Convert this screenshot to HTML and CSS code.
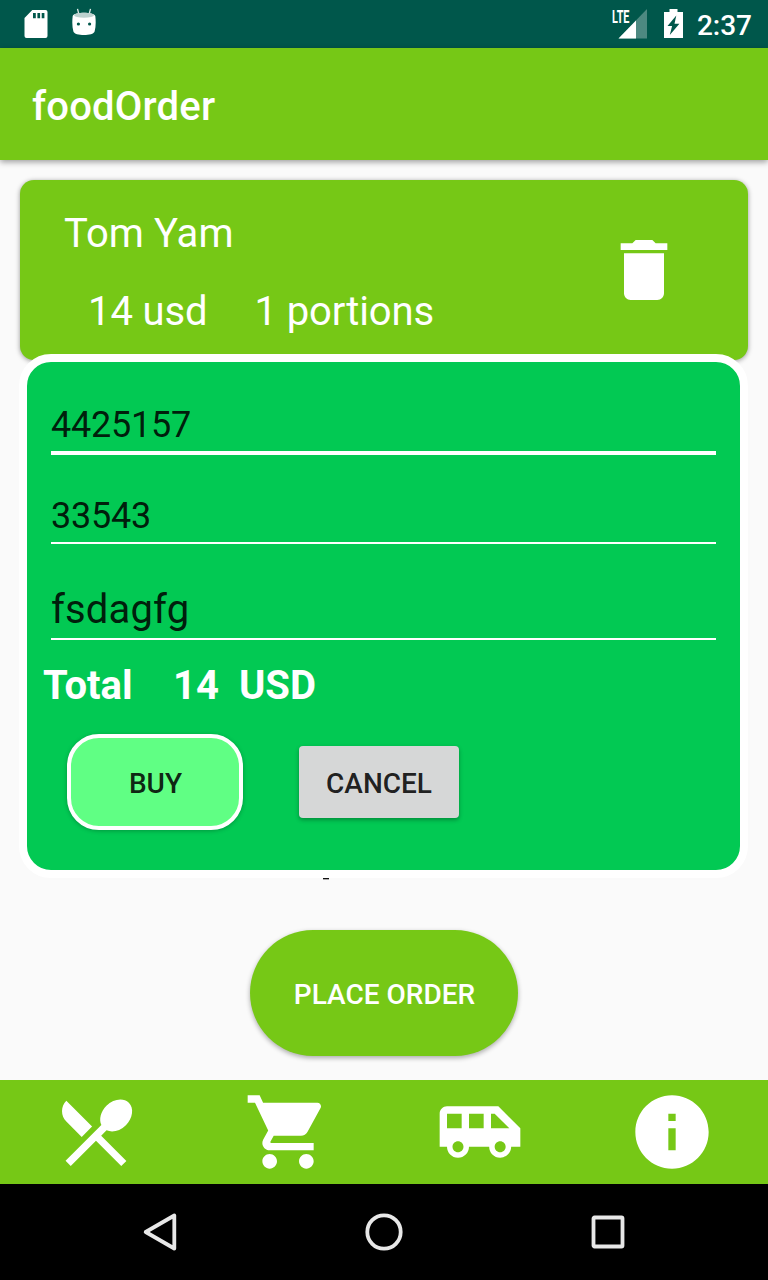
FILE: index.html
```html
<!DOCTYPE html>
<html lang="en">
<head>
<meta charset="utf-8">
<title>foodOrder</title>
<link rel="stylesheet" href="styles.css">
</head>
<body>
<div class="screen">
  <header class="status">
    <div class="status-left">
      <svg width="24" height="28" viewBox="0 0 24 28"><path fill="#fff" fill-rule="evenodd" d="M8.300 0H21.500a2 2 0 0 1 2 2V26a2 2 0 0 1-2 2H2.500a2 2 0 0 1-2-2V8zM9 3v5.200h2.800V3zM13.400 3v5.200h2.700V3zM17.700 3v5.200h2.700V3z"/></svg>
      <svg width="24" height="28" viewBox="0 0 24 28"><path d="M6.700 5.500L5.500 .8M17.300 5.500L18.500 .8" stroke="#dfeae8" stroke-width="1.300" fill="none"/><path fill="#fff" d="M.7 8C2 3.800 22 3.800 23.300 8c.7 6 .5 11-.7 15.500C21.500 28.200 2.500 28.200 1.400 23.500.2 19 0 14 .7 8z"/><ellipse cx="12" cy="7.200" rx="10" ry="2.500" fill="#bdd2cf"/><circle cx="6.400" cy="16" r="1.600" fill="#00574b"/><circle cx="17.600" cy="16" r="1.600" fill="#00574b"/></svg>
    </div>
    <div class="status-right">
      <div class="signal">
        <svg width="30" height="30" viewBox="0 0 30 30"><path d="M30 0V29.500H1.500z" fill="#4d8981"/><path d="M19 11.600V29.500H1.500z" fill="#fff"/></svg>
        <span class="lte">LTE</span>
      </div>
      <svg class="battery" width="19" height="29" viewBox="0 0 19 29"><path fill="#fff" fill-rule="evenodd" d="M5.500 0h8v3H19v26H0V3h5.500zM12.300 6.500L3.500 17h4.600l-2.300 9 9.600-11.300h-4.900z"/></svg>
      <span class="clock">2:37</span>
    </div>
  </header>
  <header class="appbar"><h1 class="title">foodOrder</h1></header>

  <main class="content">
    <section class="card">
      <div class="card-info">
        <p class="dish">Tom Yam</p>
        <p class="details"><span>14 usd</span><span>1 portions</span></p>
      </div>
      <svg class="trash" width="80" height="80" viewBox="0 0 24 24"><path fill="#fff" d="M6 19c0 1.100.9 2 2 2h8c1.100 0 2-.9 2-2V7H6v12zM19 4h-3.500l-1-1h-5l-1 1H5v2h14V4z"/></svg>
    </section>
    <button class="place">PLACE ORDER</button>
    <span class="hidden-total"></span>
    <form class="dialog">
      <div class="field focused">4425157</div>
      <div class="field">33543</div>
      <div class="field address">fsdagfg</div>
      <div class="total"><span class="t-label">Total</span><span class="t-sum">14</span><span>USD</span></div>
      <div class="actions">
        <button type="button" class="buy">BUY</button>
        <button type="button" class="cancel">CANCEL</button>
      </div>
    </form>
  </main>

  <nav class="tabs">
    <svg viewBox="0 0 24 24"><path d="M8.100 13.340l2.830-2.830L3.910 3.500c-1.560 1.560-1.560 4.090 0 5.660l4.190 4.180zm6.780-1.810c1.530.71 3.680.21 5.270-1.380 1.910-1.910 2.280-4.650.81-6.120-1.460-1.460-4.200-1.100-6.120.81-1.590 1.590-2.090 3.740-1.380 5.270L3.700 19.870l1.410 1.410L12 14.410l6.880 6.880 1.410-1.410L13.410 13l1.470-1.470z"/></svg>
    <svg viewBox="0 0 24 24"><path d="M7 18c-1.100 0-1.990.9-1.990 2S5.900 22 7 22s2-.9 2-2-.9-2-2-2zM1 2v2h2l3.600 7.590-1.350 2.450c-.16.28-.25.61-.25.96 0 1.100.9 2 2 2h12v-2H7.420c-.14 0-.25-.11-.25-.25l.03-.12.9-1.630h7.450c.75 0 1.410-.41 1.750-1.030l3.580-6.490c.08-.14.12-.31.12-.48 0-.55-.45-1-1-1H5.210l-.94-2H1zm16 16c-1.100 0-1.990.9-1.990 2s.89 2 1.990 2 2-.9 2-2-.9-2-2-2z"/></svg>
    <svg viewBox="0 0 24 24"><path d="M17 5H3c-1.100 0-2 .89-2 2v9h2c0 1.650 1.340 3 3 3s3-1.350 3-3h5.500c0 1.650 1.340 3 3 3s3-1.350 3-3H23v-5l-6-6zM3 11V7h4v4H3zm3 6.500c-.83 0-1.500-.67-1.500-1.500s.67-1.500 1.500-1.500 1.500.67 1.500 1.500-.67 1.500-1.500 1.500zm7-6.500H9V7h4v4zm4.500 6.500c-.83 0-1.500-.67-1.500-1.500s.67-1.500 1.500-1.500 1.500.67 1.500 1.500-.67 1.500-1.500 1.500zM15 11V7h1l4 4h-5z"/></svg>
    <svg viewBox="0 0 24 24"><path d="M12 2C6.480 2 2 6.480 2 12s4.480 10 10 10 10-4.480 10-10S17.520 2 12 2zm1 15h-2v-6h2v6zm0-8h-2V7h2v2z"/></svg>
  </nav>
  <footer class="sysnav">
    <svg viewBox="0 0 48 48"><path d="M38.300 7.500V40.500L9.700 24z"/></svg>
    <svg viewBox="0 0 48 48"><circle cx="24" cy="24" r="16.700"/></svg>
    <svg viewBox="0 0 48 48"><rect x="9.500" y="9.500" width="29" height="29" rx="1"/></svg>
  </footer>
</div>
</body>
</html>
```
FILE: styles.css
```css
* { box-sizing: border-box; }
body, h1, p { margin: 0; }
body { font-family: Roboto, sans-serif; background: #fafafa; }
svg { display: block; flex: none; }
button { font: 500 28px/32px Roboto, sans-serif; padding: 0; border: 0; }

.screen { width: 768px; height: 1280px; display: flex; flex-direction: column; overflow: hidden; }

.status { height: 48px; background: #00574b; display: flex; justify-content: space-between; padding: 0 16px 0 24px; }
.status-left { display: flex; gap: 24px; padding-top: 10px; }
.status-left svg + svg { margin-top: -2px; }
.status-right { display: flex; align-items: flex-start; color: #fff; }
.signal { position: relative; padding-top: 9px; margin-right: 17px; }
.lte { position: absolute; left: -5px; top: 8px; font: 700 18px/18px Roboto, sans-serif; transform: scaleX(.6); transform-origin: 0 0; }
.battery { margin: 9px 14px 0 0; }
.clock { font-size: 28px; line-height: 32px; font-weight: 500; padding-top: 10px; }

.appbar { height: 112px; background: #76c816; display: flex; align-items: center; padding: 6px 32px 0; box-shadow: 0 2px 6px rgba(0,0,0,.38); z-index: 1; flex: none; }
.title { font-size: 40px; line-height: 48px; font-weight: 500; letter-spacing: .2px; color: #fff; }

.content { height: 920px; position: relative; padding: 20px 20px 24px; display: flex; flex-direction: column; align-items: center; justify-content: space-between; }
.card { width: 728px; height: 180px; border-radius: 14px; background: #76c816; box-shadow: 0 1px 5px rgba(0,0,0,.4); display: flex; justify-content: space-between; padding: 30px 64px 0 44px; color: #fff; font-size: 40px; line-height: 48px; letter-spacing: .05px; }
.details { display: flex; gap: 48px; padding: 30px 0 0 24px; letter-spacing: -.1px; }
.details span + span { margin-left: -1px; }
.trash { margin-top: 20px; }
.place { width: 268px; height: 126px; border-radius: 63px; background: #76c816; color: #fff; padding: 3px 0 0 1px; box-shadow: 0 2px 5px rgba(0,0,0,.32); }
.hidden-total { position: absolute; left: 323px; top: 718px; width: 6px; height: 2px; background: linear-gradient(#111 50%, #aaa 50%); }

.dialog { position: absolute; left: 19px; top: 194px; width: 729px; height: 524px; border: 8px solid #fff; border-radius: 32px; background: #02c953; }
.field { margin: 0 24px; height: 89px; display: flex; align-items: flex-end; font-size: 36px; line-height: 44px; letter-spacing: -.25px; color: rgba(0,0,0,.87); padding-bottom: 4px; border-bottom: 2px solid #fff; }
.focused { height: 93px; border-bottom-width: 4px; }
.address { height: 96px; font-size: 40px; line-height: 48px; letter-spacing: .15px; padding-bottom: 4px; }
.total { display: flex; padding: 22px 16px 0; font-size: 40px; line-height: 48px; font-weight: 700; color: #fff; }
.t-label { width: 130px; }
.t-sum { width: 66px; }
.actions { display: flex; align-items: center; gap: 56px; padding: 24px 40px 0; }
.actions button { color: rgba(0,0,0,.87); padding-top: 3px; }
.actions .buy { width: 176px; height: 96px; background: #60ff84; border: 4px solid #fff; border-radius: 32px; padding-left: 1px; box-shadow: 0 1px 4px rgba(0,0,0,.25); }
.cancel { width: 160px; height: 72px; background: #d6d7d7; border-radius: 4px; box-shadow: 0 2px 4px rgba(0,0,0,.3); }

.tabs { height: 104px; background: #76c816; display: grid; grid-template-columns: repeat(4, 1fr); place-items: center; }
.tabs svg { width: 88px; height: 88px; fill: #fff; }
.sysnav { height: 96px; background: #000; display: flex; align-items: center; justify-content: space-between; padding: 0 136px; }
.sysnav svg { width: 48px; height: 48px; fill: none; stroke: #e8e8e8; stroke-width: 3.800; stroke-linejoin: round; }
```
